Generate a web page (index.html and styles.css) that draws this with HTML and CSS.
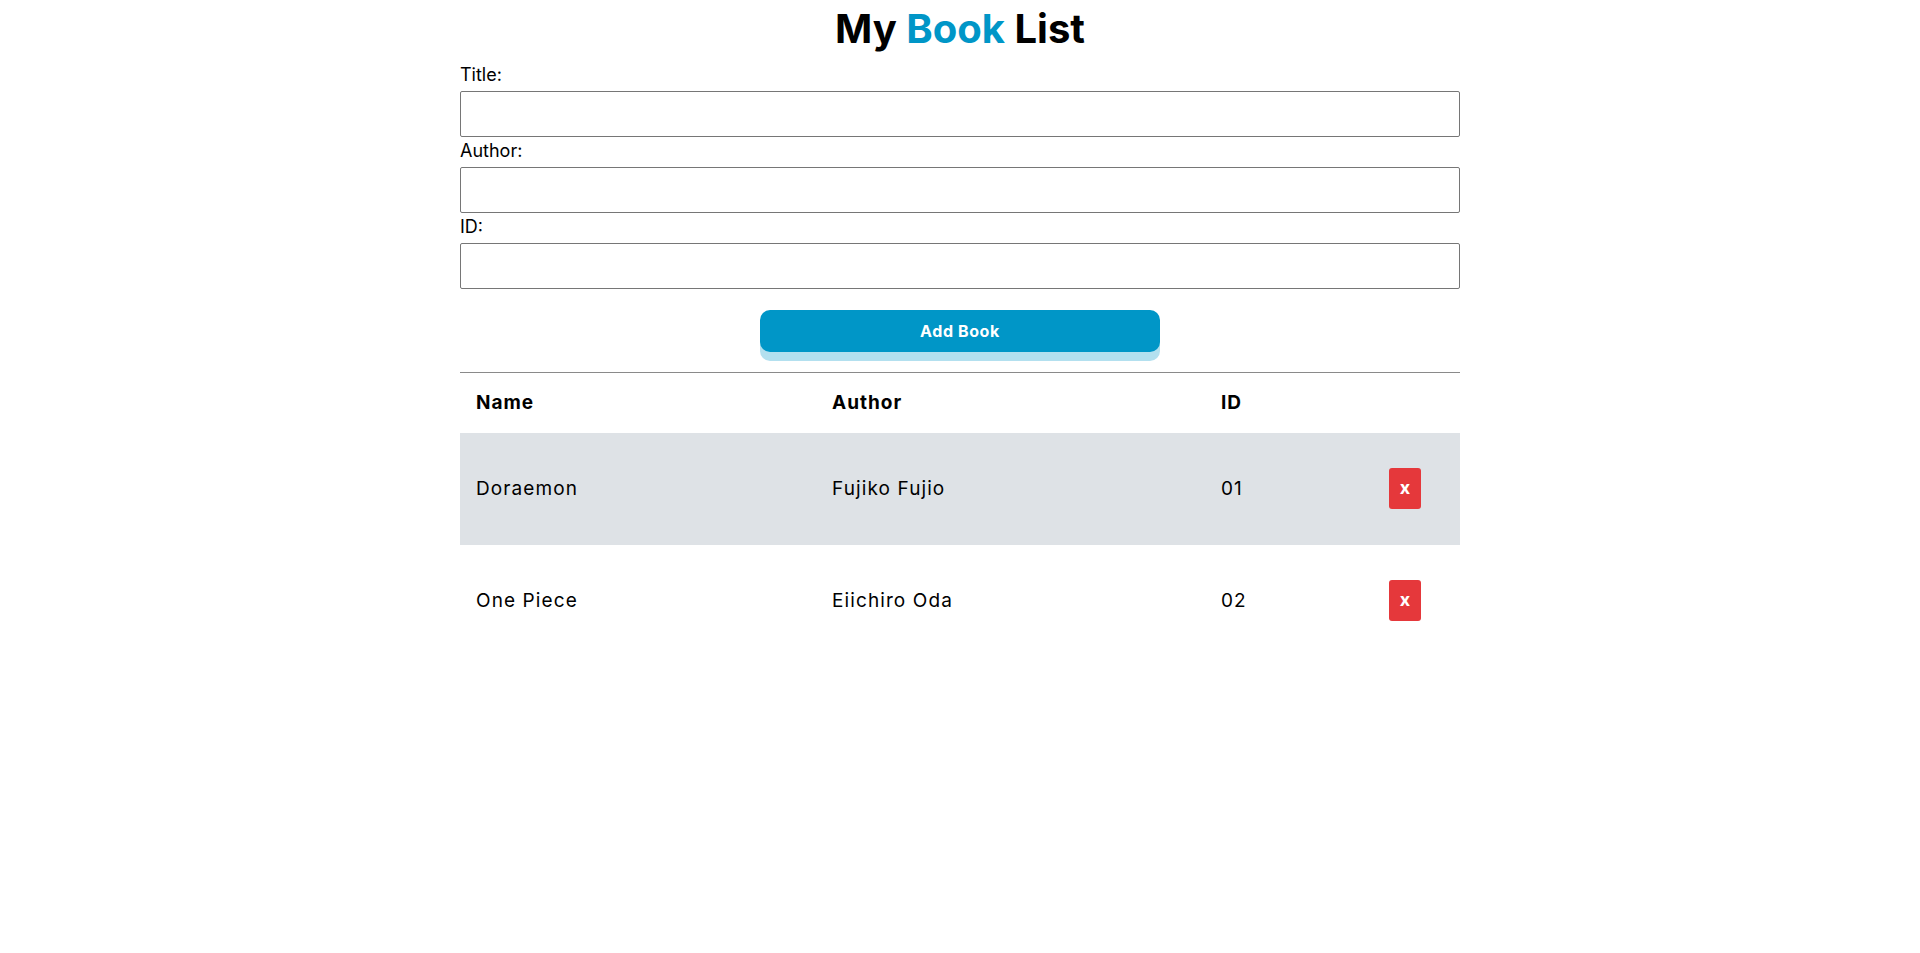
FILE: index.html
```html
<!DOCTYPE html>
<html lang="en">
<head>
<meta charset="utf-8">
<title>My Book List</title>
<link rel="stylesheet" href="styles.css">
</head>
<body>
<main class="container">
  <h1 class="page-title">My <span class="accent">Book</span> List</h1>
  <form class="book-form">
    <label class="field-label" for="title">Title:</label>
    <input class="field-input" id="title" type="text">
    <label class="field-label" for="author">Author:</label>
    <input class="field-input" id="author" type="text">
    <label class="field-label" for="isbn">ID:</label>
    <input class="field-input" id="isbn" type="text">
    <div class="form-actions">
      <button class="add-btn" type="button">Add Book</button>
    </div>
  </form>
  <table class="book-table">
    <colgroup>
      <col class="col-name">
      <col class="col-author">
      <col class="col-id">
      <col class="col-action">
    </colgroup>
    <thead>
      <tr class="head-row">
        <th>Name</th>
        <th>Author</th>
        <th>ID</th>
        <th></th>
      </tr>
    </thead>
    <tbody>
      <tr class="book-row striped">
        <td>Doraemon</td>
        <td>Fujiko Fujio</td>
        <td>01</td>
        <td><button class="del-btn" type="button">x</button></td>
      </tr>
      <tr class="book-row">
        <td>One Piece</td>
        <td>Eiichiro Oda</td>
        <td>02</td>
        <td><button class="del-btn" type="button">x</button></td>
      </tr>
    </tbody>
  </table>
</main>
</body>
</html>
```

FILE: styles.css
```css
* {
  box-sizing: border-box;
}

body {
  margin: 0;
  background: #ffffff;
  color: #000000;
  font-family: "Inter", "Noto Sans", sans-serif;
}

.container {
  width: 1000px;
  margin: 0 auto;
}

.page-title {
  margin: 0;
  height: 61px;
  line-height: 58px;
  font-size: 40px;
  font-weight: 700;
  text-align: center;
}

.accent {
  color: #0096c7;
}

.book-form {
  display: flex;
  flex-direction: column;
}

.field-label {
  display: block;
  height: 30px;
  padding-top: 2px;
  font-size: 18px;
  line-height: 24px;
  font-weight: 400;
}

.field-input {
  display: block;
  width: 100%;
  height: 46px;
  border: 1px solid #767676;
  border-radius: 2px;
  padding: 4px 8px;
  font-family: inherit;
  font-size: 16px;
}

.form-actions {
  display: flex;
  justify-content: center;
  padding-top: 21px;
}

.add-btn {
  width: 400px;
  height: 42px;
  border: none;
  border-radius: 10px;
  background: #0096c7;
  color: #ffffff;
  font-family: inherit;
  font-size: 16px;
  font-weight: 700;
  letter-spacing: 0.6px;
  box-shadow: 0 9px 0 #b3e0ef;
  cursor: pointer;
}

.book-table {
  width: 100%;
  margin-top: 20px;
  border-collapse: collapse;
  border-top: 1px solid #8a8a8a;
  table-layout: fixed;
}

.col-name { width: 356px; }
.col-author { width: 389px; }
.col-id { width: 168px; }
.col-action { width: 87px; }

.head-row th {
  height: 60px;
  padding: 0 16px;
  text-align: left;
  font-size: 19px;
  font-weight: 700;
  letter-spacing: 1px;
}

.book-row td {
  height: 112px;
  padding: 0 16px;
  font-size: 19px;
  font-weight: 400;
  letter-spacing: 1.1px;
  vertical-align: middle;
}

.striped {
  background: #dee2e6;
}

.del-btn {
  display: block;
  width: 32px;
  height: 41px;
  border: none;
  border-radius: 3px;
  background: #e5383b;
  color: #ffffff;
  font-family: inherit;
  font-size: 18px;
  font-weight: 700;
  letter-spacing: 0;
  padding: 0 0 3px;
  cursor: pointer;
}
```
